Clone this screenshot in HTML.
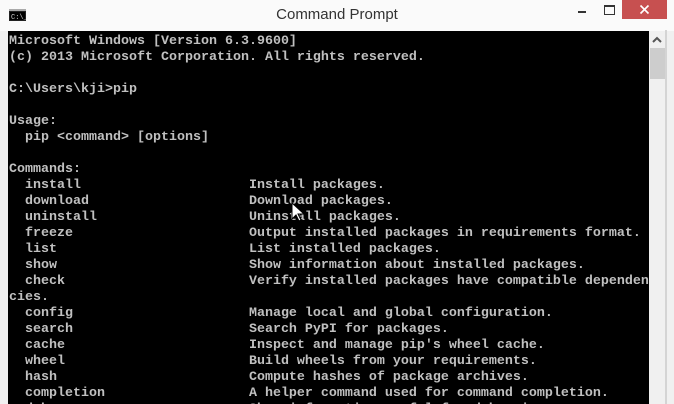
<!DOCTYPE html>
<html><head><style>
html,body{margin:0;padding:0;width:674px;height:404px;overflow:hidden;background:#f0f0f0;}
.title{position:absolute;left:0;top:0;width:674px;height:31px;background:#fafafa;}
.title .t{position:absolute;left:0;width:674px;top:6px;text-align:center;font:15px "Liberation Sans",sans-serif;color:#333;}
.close{position:absolute;left:622px;top:0;width:45px;height:19px;background:#c75050;}
.term{position:absolute;left:8px;top:31px;width:641px;height:373px;background:#000;overflow:hidden;}
pre{margin:0;position:absolute;left:1px;top:3px;font:bold 13.33px/16px "Liberation Mono",monospace;color:#c0c0c0;}
.sb{position:absolute;left:649px;top:31px;width:16px;height:373px;background:#f0f0f0;}
.thumb{position:absolute;left:650px;top:48px;width:15px;height:31px;background:#cdcdcd;}
.bord{position:absolute;left:665px;top:30px;width:2px;height:374px;background:#d4d4d4;}
</style></head><body>
<div class="title">
<svg style="position:absolute;left:9px;top:9px" width="17" height="12"><rect x="0" y="0" width="17" height="12" fill="#222"/><rect x="1" y="3" width="15" height="8" fill="#000"/><rect x="0" y="0" width="17" height="2" fill="#aaa"/><text x="2" y="10" font-size="7" fill="#ccc" font-family="Liberation Mono">C:\_</text></svg>
<div class="t">Command Prompt</div>
<div style="position:absolute;left:578px;top:11px;width:8px;height:2px;background:#333"></div>
<div style="position:absolute;left:604px;top:5px;width:9px;height:7px;border:1px solid #333;border-top-width:2px"></div>
<div class="close"><svg width="45" height="19"><path d="M18.5 5.5l8 8M26.5 5.5l-8 8" stroke="#fff" stroke-width="1.6"/></svg></div>
</div>
<div class="term"><pre>Microsoft Windows [Version 6.3.9600]
(c) 2013 Microsoft Corporation. All rights reserved.

C:\Users\kji>pip

Usage:
  pip &lt;command&gt; [options]

Commands:
  install                     Install packages.
  download                    Download packages.
  uninstall                   Uninstall packages.
  freeze                      Output installed packages in requirements format.
  list                        List installed packages.
  show                        Show information about installed packages.
  check                       Verify installed packages have compatible dependen
cies.
  config                      Manage local and global configuration.
  search                      Search PyPI for packages.
  cache                       Inspect and manage pip's wheel cache.
  wheel                       Build wheels from your requirements.
  hash                        Compute hashes of package archives.
  completion                  A helper command used for command completion.
  debug                       Show information useful for debugging.</pre></div>
<div class="sb"></div>
<div class="thumb"></div>
<svg style="position:absolute;left:652px;top:36px" width="10" height="8"><path d="M1 6l4-4 4 4" stroke="#555" stroke-width="2" fill="none"/></svg>
<div class="bord"></div>
<svg style="position:absolute;left:291px;top:202px" width="14" height="21"><path d="M1 1v16l4-4 3 6 2-1-3-6h6z" fill="#fff" stroke="#000" stroke-width="1"/></svg>
</body></html>
